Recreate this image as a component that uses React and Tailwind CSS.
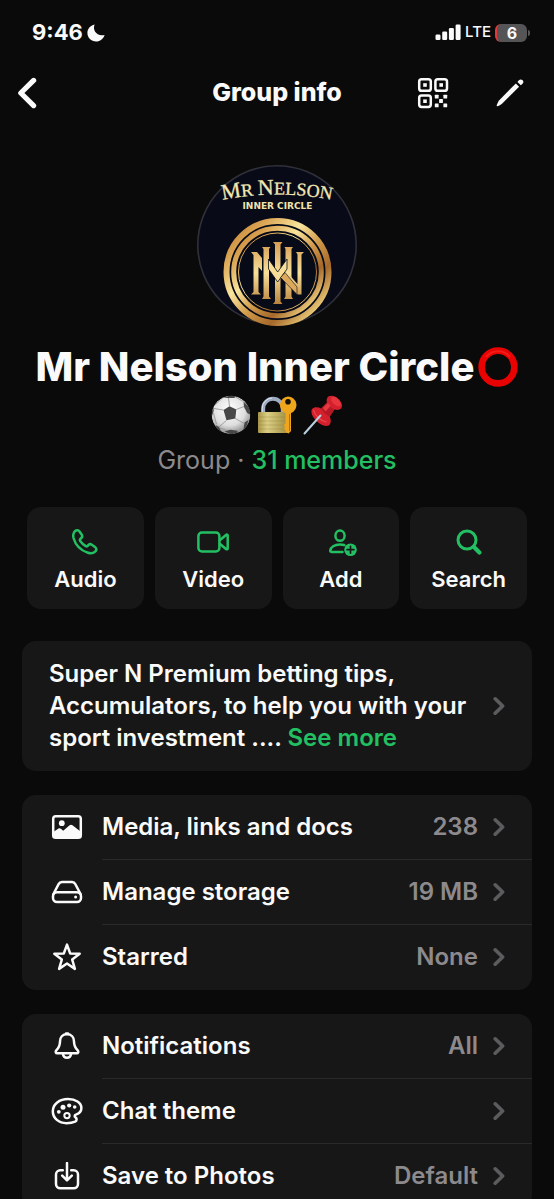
function Icon({ w, h, children, className = '', label }) {
  return (
    <svg
      width={w}
      height={h}
      viewBox={`0 0 ${w} ${h}`}
      fill="none"
      stroke="currentColor"
      strokeWidth="2.5"
      strokeLinecap="round"
      strokeLinejoin="round"
      className={`shrink-0 ${className}`}
      role={label ? 'img' : undefined}
      aria-label={label}
      aria-hidden={label ? undefined : true}
    >
      {children}
    </svg>
  );
}

function StatusBar() {
  return (
    <div className="flex h-[66px] items-center justify-between pr-6 pl-8">
      <div className="flex items-center gap-1">
        <span className="text-[22px] font-bold">9:46</span>
        <Icon w={18} h={18}>
          <path
            d="M7.6 .6C5.2 6.4 9.8 12.8 17.6 10.9C16.3 15 13 17.4 9.2 17.4C4.2 17.4 .4 13.6 .4 8.9C.4 5 3.3 1.6 7.6 .6Z"
            fill="currentColor"
            stroke="none"
          />
        </Icon>
      </div>
      <div className="flex items-center gap-1">
        <Icon w={26} h={17} label="Signal strength">
          <g fill="currentColor" stroke="none">
            <rect x="0.5" y="10.5" width="5" height="5.5" rx="1.3" />
            <rect x="7.2" y="7.5" width="5" height="8.5" rx="1.3" />
            <rect x="13.9" y="4" width="5" height="12" rx="1.3" />
            <rect x="20.6" y="0.5" width="5" height="15.5" rx="1.3" />
          </g>
        </Icon>
        <span className="text-[15px] font-medium">LTE</span>
        <div className="flex items-center gap-px">
          <div className="flex h-[18px] w-8 items-center justify-center overflow-hidden rounded-md border-l-2 border-[#e5383b] bg-[#555557] text-base font-bold">
            6
          </div>
          <div className="h-[6px] w-[2px] rounded-r-full bg-[#555557]" />
        </div>
      </div>
    </div>
  );
}

function Header() {
  return (
    <header className="grid h-14 grid-cols-[1fr_auto_1fr] items-center px-[17px]">
      <button aria-label="Back" className="justify-self-start">
        <Icon w={20} h={32}>
          <path d="M16.6 3.4 3.8 16l12.8 12.6" strokeWidth="5.2" />
        </Icon>
      </button>
      <h1 className="text-[25px] font-extrabold">Group info</h1>
      <div className="flex items-center gap-[46px] justify-self-end pr-3">
        <button aria-label="QR code">
          <Icon w={32} h={32}>
            <g strokeWidth="2.5">
              <rect x="2.2" y="2.2" width="11.6" height="11.6" rx="2.4" />
              <rect x="18.4" y="2.2" width="11.6" height="11.6" rx="2.4" />
              <rect x="2.2" y="18.4" width="11.6" height="11.6" rx="2.4" />
            </g>
            <g fill="currentColor" stroke="none">
              <rect x="6.2" y="6.2" width="3.6" height="3.6" />
              <rect x="22.4" y="6.2" width="3.6" height="3.6" />
              <rect x="6.2" y="22.4" width="3.6" height="3.6" />
              <rect x="17.8" y="17.8" width="3.8" height="3.8" rx=".5" />
              <rect x="26.4" y="17.8" width="3.8" height="3.8" rx=".5" />
              <rect x="22.1" y="22.1" width="3.8" height="3.8" rx=".5" />
              <rect x="17.8" y="26.4" width="3.8" height="3.8" rx=".5" />
              <rect x="26.4" y="26.4" width="3.8" height="3.8" rx=".5" />
            </g>
          </Icon>
        </button>
        <button aria-label="Edit">
          <Icon w={30} h={30}>
            <path
              d="M20.8 5.4 24.1 8.7 7 25.7C5.7 26.7 4 27.8 2.7 28.2C1.9 28.4 1.5 28 1.7 27.2C2.1 25.9 3 24 4 22.5Z"
              fill="currentColor"
              stroke="none"
            />
            <path
              d="M22.4 3.9 23.9 2.3C24.9 1.2 26.5 1.2 27.6 2.2C28.7 3.2 28.6 4.7 27.5 5.8L25.8 7.3Z"
              fill="currentColor"
              stroke="none"
            />
          </Icon>
        </button>
      </div>
    </header>
  );
}

function Avatar() {
  return (
    <svg width="160" height="162" viewBox="0 0 160 162" role="img" aria-label="Group photo" className="shrink-0">
      <defs>
        <linearGradient id="ring" x1="0" y1="0" x2="1" y2="1">
          <stop offset="0" stopColor="#b9772c" />
          <stop offset=".18" stopColor="#d9a250" />
          <stop offset=".38" stopColor="#f9e59c" />
          <stop offset=".55" stopColor="#d19a4a" />
          <stop offset=".72" stopColor="#a5682a" />
          <stop offset=".88" stopColor="#e9c878" />
          <stop offset="1" stopColor="#c08a3c" />
        </linearGradient>
        <linearGradient id="mono" gradientUnits="userSpaceOnUse" x1="0" y1="76" x2="0" y2="140">
          <stop offset="0" stopColor="#d49a50" />
          <stop offset=".5" stopColor="#f8e09a" />
          <stop offset="1" stopColor="#b87f38" />
        </linearGradient>
        <path id="arc" d="M16 37Q80 22 144 37" />
      </defs>
      <circle cx="80" cy="80" r="79.2" fill="#080a18" stroke="#30303a" strokeWidth="1.6" />
      <text fill="#f3e8b4" stroke="#f3e8b4" strokeWidth=".3" fontFamily="Liberation Serif, serif" fontSize="18" textAnchor="middle">
        <textPath href="#arc" startOffset="50%">
          <tspan fontSize="22">M</tspan>R <tspan fontSize="22">N</tspan>ELSON
        </textPath>
      </text>
      <text
        x="80.5"
        y="44"
        fill="#efe3ae"
        fontFamily="DejaVu Sans, sans-serif"
        fontSize="9"
        fontWeight="700"
        textAnchor="middle"
      >
        INNER CIRCLE
      </text>
      <circle cx="80.5" cy="107" r="54" fill="#070a17" />
      <g fill="none" stroke="url(#ring)">
        <circle cx="80.5" cy="107" r="51" strokeWidth="6" />
        <circle cx="80.5" cy="107" r="43.8" strokeWidth="5" />
        <circle cx="80.5" cy="107" r="39" strokeWidth="1" />
      </g>
      <g fill="url(#mono)">
        <path d="M54 87h6l5 6v13l-3.5-4v25l2.5 2.5H54l2.5-2.5V90Z" />
        <path d="M99 87h8l-2.5 2.5v40h-4L88 113v-8l12.5 14V89.500Z" />
        <path d="M65 82h8.5L72 84v47.5l2 2.5h-9l1.500-2.500V84Z" />
        <path d="M87.500 82H96l-1.500 2v47.500L96 134h-9l1.500-2.500V84Z" />
        <path d="M76 77h9.500L83.500 79.500v57l2 2.500H76l2-2.500v-57Z" />
      </g>
      <path
        d="M71.500 94 80.700 107 90 94v10L80.700 117 71.500 104Z"
        fill="#f7df98"
        stroke="#070a17"
        strokeWidth=".8"
      />
      <path d="M83.500 112.500 88 107.500 100 122v7.500Z" fill="#dca95c" stroke="#070a17" strokeWidth=".6" />
    </svg>
  );
}

function CircleEmoji() {
  return (
    <svg width="40" height="40" viewBox="0 0 40 40" role="img" aria-label="Hollow red circle">
      <circle cx="20" cy="20" r="16.4" fill="none" stroke="#e90202" strokeWidth="6.6" />
      <path d="M8 10A15.500 15.500 0 0 1 32 10" fill="none" stroke="#ff4438" strokeWidth="2" opacity=".4" />
    </svg>
  );
}

function BallEmoji() {
  return (
    <svg width="40" height="40" viewBox="0 0 40 40" role="img" aria-label="Football">
      <defs>
        <radialGradient id="ball" cx=".45" cy=".35" r=".65">
          <stop offset="0" stopColor="#ffffff" />
          <stop offset=".65" stopColor="#dedede" />
          <stop offset="1" stopColor="#8c8c8c" />
        </radialGradient>
        <clipPath id="ballClip">
          <circle cx="20" cy="20" r="19.3" />
        </clipPath>
      </defs>
      <g clipPath="url(#ballClip)">
        <circle cx="20" cy="20" r="19.3" fill="url(#ball)" />
        <g fill="#474747">
          <path d="M12.500 15 18.500 11.200l6.800 3.300-1 9-8.800 1.800Z" />
          <path d="M12 2.200 20 .5l6 .8-3 1.600-7 .2Z" />
          <path d="M32.500 6.500 38 12l1.800 8-3.600-2-3.200-6Z" />
          <path d="M0 14l2.500-3 .2 5L1 21H0Z" />
          <path d="M4.500 30l3.500 2 2 4-3.500-1Z" />
          <path d="M13.500 36.200l6-1.400 7 1 .5 1.600-7 2Z" />
          <path d="M33.500 27.500 37.500 25l-2 6.500-3 3Z" />
        </g>
        <path
          d="M18.500 11.200 17.500 3M25.300 14.500 33 11.500M24.300 23.500l9 5M15.500 25.300 8 32M12.500 15 3 13.500M32.500 6.500l-8-4.500M12 2.500 3 11M9 33l7 2.500M32 34l-6 2M2.500 18l3 11"
          stroke="#999999"
          strokeWidth=".9"
          fill="none"
        />
      </g>
    </svg>
  );
}

function LockEmoji() {
  return (
    <svg width="40" height="40" viewBox="0 0 40 40" role="img" aria-label="Lock with key">
      <defs>
        <linearGradient id="lock" x1="0" y1="0" x2="1" y2="0">
          <stop offset="0" stopColor="#a8964a" />
          <stop offset=".3" stopColor="#dccf84" />
          <stop offset="1" stopColor="#9c8a3c" />
        </linearGradient>
      </defs>
      <path d="M6.200 19V13.500a9.800 9.800 0 0 1 19.600 0V19" fill="none" stroke="#9eabc0" strokeWidth="4" />
      <path d="M5.200 18V13.500A10.500 10.500 0 0 1 15 3" fill="none" stroke="#dfe7f3" strokeWidth="1" />
      <rect x="1" y="17" width="31" height="21" rx="1" fill="url(#lock)" />
      <path d="M1 22h31M1 26h31M1 30h31M1 34h31" stroke="#8c7d3a" strokeWidth=".6" opacity=".5" />
      <path
        d="M31 1.500a8.600 8.600 0 0 1 3 16.600V36l-2.500 2.600L28.500 37v-2l-2-1.500 2-1.500-2-2 2-1.500V18.100A8.600 8.600 0 0 1 31 1.500Z"
        fill="#efa51c"
      />
      <path d="M32.500 19v17" stroke="#b66f0d" strokeWidth="1" />
      <circle cx="31" cy="6.800" r="2.800" fill="#171207" />
    </svg>
  );
}

function PinEmoji() {
  return (
    <svg width="40" height="40" viewBox="0 0 40 40" role="img" aria-label="Pushpin">
      <path
        d="M9 14c2.500-2.500 6-2 9-.5l6-6c-.8-2.500-.2-5 1.800-6.300 3-1.500 7 .3 10 3.300s4.200 6.500 2.400 8.800c-1.500 1.900-4.200 2-6.700 1.200l-4.800 7c1.600 3.500 1.500 7-1 9-4 1.500-8.500-.8-12.200-4.400S7.200 17.600 9 14Z"
        fill="#d4202c"
      />
      <path d="M18 13.500c2 3.500 5 6.500 8.700 8l4.800-7c-3.500-1.500-6-4-7.500-7Z" fill="#b31824" />
      <path d="M20 13l5-5 2.500 3-5 5.500Z" fill="#e63a42" />
      <ellipse cx="33" cy="6.500" rx="6" ry="3.300" transform="rotate(45 33 6.500)" fill="#e8343d" />
      <path d="M10.500 15c1 5 7 11 13 12" fill="none" stroke="#ea4a50" strokeWidth="1.200" />
      <path d="M1.500 38.500 17.500 20.500" stroke="#b9d0de" strokeWidth="2" strokeLinecap="round" />
    </svg>
  );
}

const actions = [
  {
    label: 'Audio',
    icon: (
      <Icon w={26} h={26}>
        <path d="M3 2.200C4.500.8 6.500 1 7.500 2.500L9.800 5.800C10.600 7 10.300 8 9.300 9L8.300 10C7.700 10.700 7.700 11.300 8.200 12C9.800 14.300 11.700 16 13.800 17.200C14.500 17.600 15 17.500 15.500 17L16.600 15.900C17.500 15 18.600 14.900 19.800 15.700L23 18C24.600 19.200 24.800 21 23.400 22.400C21.600 24.200 19 24.800 16 23.800C9 21.500 3.500 16 1.500 9C.8 6 1.200 4 3 2.200Z" />
      </Icon>
    ),
  },
  {
    label: 'Video',
    icon: (
      <Icon w={32} h={26}>
        <rect x="1.400" y="3.600" width="21" height="18.800" rx="3.500" />
        <path d="M22.800 11.200 29 6C29.800 5.300 30.700 5.700 30.700 6.600V19.400C30.700 20.300 29.800 20.700 29 20L22.800 14.800" />
      </Icon>
    ),
  },
  {
    label: 'Add',
    icon: (
      <Icon w={28} h={28} className="ml-1">
        <ellipse cx="11" cy="7.700" rx="4.600" ry="5.100" />
        <path d="M13.500 24H2.800C1.800 24 1.200 23.400 1.300 22.500C1.700 19.200 5.300 16.400 11 16.400C12.600 16.400 14 16.600 15.200 17" />
        <circle cx="21.500" cy="21.700" r="6.300" fill="currentColor" stroke="none" />
        <path d="M21.500 18.300v6.800M18.100 21.700h6.800" stroke="#171717" strokeWidth="1.700" />
      </Icon>
    ),
  },
  {
    label: 'Search',
    icon: (
      <Icon w={26} h={26}>
        <circle cx="11" cy="11" r="9" strokeWidth="3" />
        <path d="M18 18l5.400 5.400" strokeWidth="4.200" />
      </Icon>
    ),
  },
];

function Actions() {
  return (
    <div className="grid grid-cols-4 gap-[11px] px-[5px]">
      {actions.map((a) => (
        <button
          key={a.label}
          className="flex h-[102px] flex-col items-center gap-2 rounded-[14px] bg-[#171717] pt-[22px]"
        >
          <span className="flex h-[26px] items-center text-[#23c063]">{a.icon}</span>
          <span className="text-[22px] leading-8 font-semibold">{a.label}</span>
        </button>
      ))}
    </div>
  );
}

function Chevron() {
  return (
    <Icon w={12} h={20} className="text-[#5c5c5f]">
      <path d="M2.200 2.800 9.600 10l-7.400 7.200" strokeWidth="3.600" />
    </Icon>
  );
}

const icons = {
  media: (
    <Icon w={32} h={28}>
      <rect x="2.200" y="3.200" width="27.600" height="21.600" rx="2.600" />
      <path
        d="M3 18.500 7.500 15.600C8.300 15.100 9.200 15.200 9.900 15.800L12.200 17.700 18.600 12.200C19.500 11.500 20.600 11.500 21.500 12.300L29.500 18.500V24.500H3Z"
        fill="currentColor"
        stroke="none"
      />
      <circle cx="10.800" cy="10.200" r="2.900" fill="currentColor" stroke="none" />
    </Icon>
  ),
  storage: (
    <Icon w={32} h={28}>
      <path d="M2.200 16.500 7.600 6.200C8.300 4.800 9.300 4 10.900 4H21.100C22.700 4 23.700 4.800 24.400 6.200L29.800 16.500" />
      <rect x="2" y="14.200" width="28" height="9.800" rx="4" />
      <circle cx="24.600" cy="19.100" r="1.500" fill="currentColor" stroke="none" />
    </Icon>
  ),
  star: (
    <Icon w={32} h={28}>
      <path d="M16 1.600 19.200 10.500 28.700 10.800 21.200 16.600 23.900 25.900 16 20.500 8.100 25.900 10.800 16.600 3.300 10.800 12.800 10.500Z" />
    </Icon>
  ),
  bell: (
    <Icon w={32} h={28}>
      <path d="M16 2.200C11.600 2.200 9 5.300 9 9.400C9 13.800 7.700 15.800 5.300 18.400C4.200 19.700 4.600 21.300 6.300 21.300H25.700C27.400 21.300 27.800 19.700 26.700 18.400C24.300 15.800 23 13.800 23 9.400C23 5.300 20.400 2.200 16 2.200Z" />
      <path d="M11.900 21.500C12.200 24.200 13.600 25.800 16 25.800S19.800 24.200 20.100 21.500" />
      <path d="M15 1.600h2" />
    </Icon>
  ),
  palette: (
    <Icon w={32} h={28}>
      <path d="M17 2C8.500 2 1.800 7.200 1.800 14.300C1.800 21.400 8 26.200 15.500 26.200C19 26.200 22 25.600 24.100 24.600C26.200 23.500 25.900 21.300 24.500 20.400C23.200 19.500 23.400 18.100 24.900 17.600C28.300 16.500 30.400 14.300 30.400 11C30.400 5.500 24.500 2 17 2Z" />
      <circle cx="16" cy="18.600" r="2.700" strokeWidth="2" />
      <g fill="currentColor" stroke="none">
        <circle cx="7.800" cy="14.800" r="1.900" />
        <circle cx="12" cy="10.200" r="2.500" />
        <circle cx="18.200" cy="8.500" r="2.100" />
        <circle cx="23.700" cy="10" r="1.800" />
      </g>
    </Icon>
  ),
  save: (
    <Icon w={32} h={28}>
      <path d="M11.800 8.300H9.300C6.800 8.300 5 10.100 5 12.600V22C5 24.500 6.800 26.300 9.300 26.300H22.700C25.200 26.300 27 24.500 27 22V12.600C27 10.100 25.200 8.300 22.700 8.300H20.200" />
      <path d="M16 1v17M11.200 13.600 16 18.400l4.800-4.800" />
    </Icon>
  ),
};

const groups = [
  [
    { icon: 'media', label: 'Media, links and docs', value: '238' },
    { icon: 'storage', label: 'Manage storage', value: '19 MB' },
    { icon: 'star', label: 'Starred', value: 'None' },
  ],
  [
    { icon: 'bell', label: 'Notifications', value: 'All' },
    { icon: 'palette', label: 'Chat theme', value: '' },
    { icon: 'save', label: 'Save to Photos', value: 'Default' },
  ],
];

function Row({ icon, label, value, last }) {
  return (
    <li>
      <button className="flex h-[65px] w-full items-center pl-[29px] text-left text-2xl font-semibold">
        {icons[icon]}
        <span
          className={`ml-[19px] flex h-full grow items-center pr-[27px] ${
            last ? '' : 'border-b border-[#2a2a2b]'
          }`}
        >
          <span className="grow">{label}</span>
          <span className="pr-[15px] text-[#8d8a8d]">{value}</span>
          <Chevron />
        </span>
      </button>
    </li>
  );
}

export default function App() {
  return (
    <div className="flex h-screen flex-col bg-[#0a0a0a] font-['Inter',sans-serif] text-[#fafafa]">
      <StatusBar />
      <Header />
      <main className="min-h-0 grow overflow-y-auto px-[22px] pt-11 [scrollbar-width:none]">
        <section className="flex flex-col items-center text-center">
          <Avatar />
          <h2 className="mt-4 flex flex-col items-center text-[40px] leading-[48px] font-extrabold">
            <span className="flex items-center gap-1 whitespace-nowrap">
              Mr Nelson Inner Circle
              <CircleEmoji />
            </span>
            <span className="flex h-12 items-center gap-[6px]">
              <BallEmoji />
              <LockEmoji />
              <PinEmoji />
            </span>
          </h2>
          <p className="mt-1 text-[25px] leading-[34px] text-[#8d8a8d]">
            Group · <a href="#members" className="font-medium text-[#23c063]">31 members</a>
          </p>
        </section>

        <div className="mt-[30px]">
          <Actions />
        </div>

        <button className="mt-8 flex w-full items-center justify-between rounded-[14px] bg-[#171717] px-[27px] py-[17px] text-left">
          <span className="text-2xl leading-8 font-semibold">
            Super N Premium betting tips,
            <br />
            Accumulators, to help you with your
            <br />
            sport investment .... <span className="text-[#23c063]">See more</span>
          </span>
          <Chevron />
        </button>

        {groups.map((rows, i) => (
          <ul key={i} className="mt-6 overflow-hidden rounded-[14px] bg-[#171717]">
            {rows.map((r, j) => (
              <Row key={r.label} {...r} last={j === rows.length - 1} />
            ))}
          </ul>
        ))}
      </main>
    </div>
  );
}
